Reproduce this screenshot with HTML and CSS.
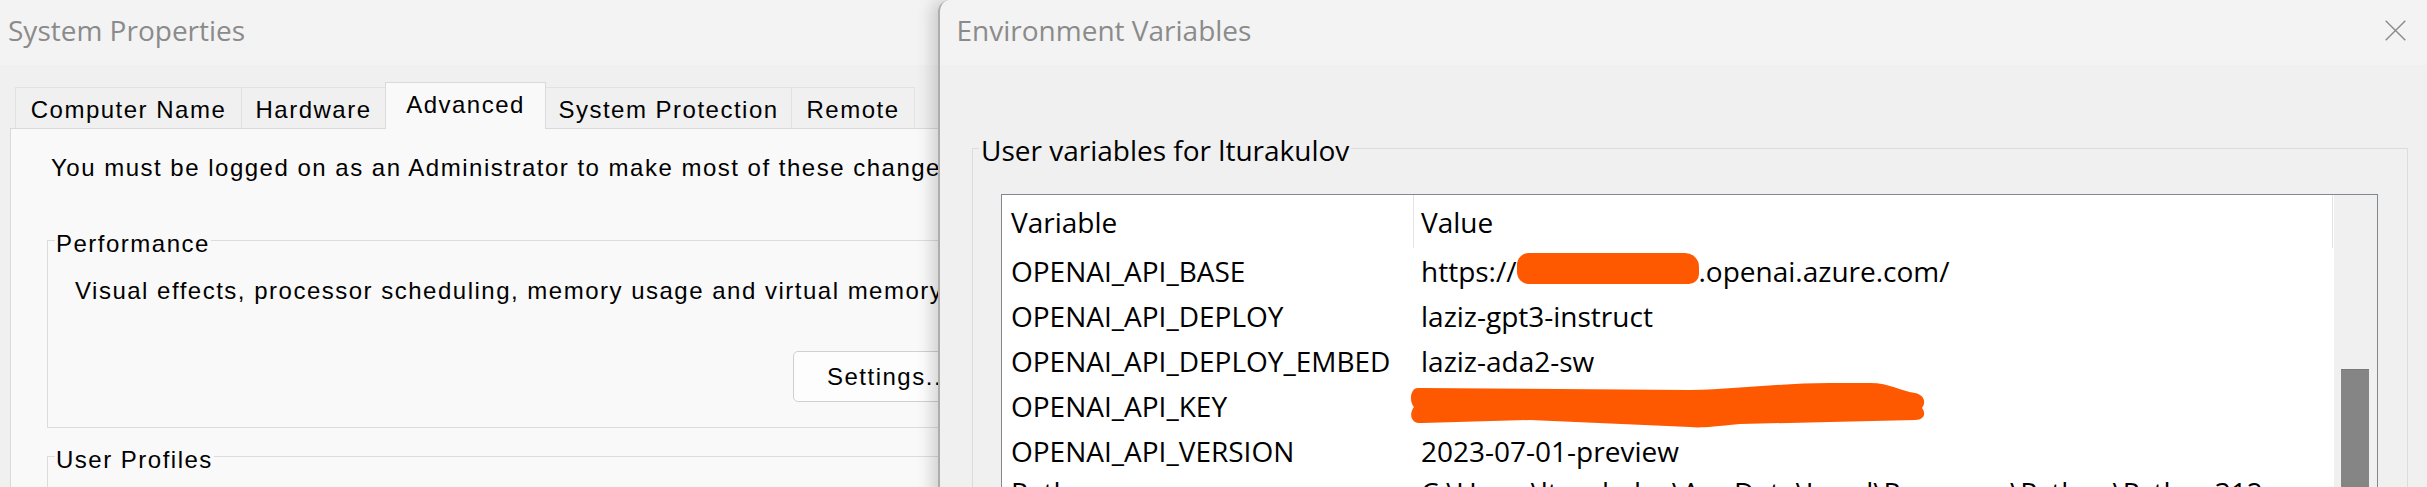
FILE: index.html
```html
<!DOCTYPE html>
<html lang="en">
<head>
<meta charset="utf-8">
<title>System Properties - Environment Variables</title>
<link rel="stylesheet" href="styles.css">
</head>
<body>
<div class="desk">
  <section class="win win-sys">
    <header class="titlebar"><span class="title">System Properties</span></header>
    <div class="win-body classic">
      <div class="tabs">
        <div class="tab w-cn">Computer Name</div>
        <div class="tab w-hw">Hardware</div>
        <div class="tab active w-adv">Advanced</div>
        <div class="tab w-sp">System Protection</div>
        <div class="tab w-rm">Remote</div>
      </div>
      <div class="panel">
        <p class="admin-note">You must be logged on as an Administrator to make most of these changes.</p>
        <fieldset class="group perf">
          <legend>Performance</legend>
          <p class="group-text">Visual effects, processor scheduling, memory usage and virtual memory</p>
          <button class="btn" type="button">Settings...</button>
        </fieldset>
        <fieldset class="group profiles">
          <legend>User Profiles</legend>
        </fieldset>
      </div>
    </div>
  </section>

  <section class="win win-env">
    <header class="titlebar env-titlebar">
      <span class="title">Environment Variables</span>
      <svg class="close" viewBox="0 0 21 21" aria-hidden="true">
        <path d="M0.7 0.7 L20.3 20.3 M20.3 0.7 L0.7 20.3" stroke="#8a8a8a" stroke-width="1.4" fill="none"/>
      </svg>
    </header>
    <div class="env-body segoe">
      <fieldset class="env-group">
        <legend>User variables for lturakulov</legend>
        <div class="listbox">
          <div class="list-main">
            <div class="list-head">
              <div class="hcell col-var">Variable</div>
              <div class="hcell col-val">Value</div>
            </div>
            <div class="list-rows">
              <div class="row">
                <div class="cell col-var">OPENAI_API_BASE</div>
                <div class="cell col-val">https://<span class="scribble"></span>.openai.azure.com/</div>
              </div>
              <div class="row">
                <div class="cell col-var">OPENAI_API_DEPLOY</div>
                <div class="cell col-val">laziz-gpt3-instruct</div>
              </div>
              <div class="row">
                <div class="cell col-var">OPENAI_API_DEPLOY_EMBED</div>
                <div class="cell col-val">laziz-ada2-sw</div>
              </div>
              <div class="row">
                <div class="cell col-var">OPENAI_API_KEY</div>
                <div class="cell col-val redacted-cell">
                  <svg class="brush" viewBox="0 0 515 45" aria-hidden="true">
                    <path d="M8 5 L280 7 C330 6 370 0 420 0 L460 0 C480 0 490 8 505 10 C515 12 516 20 512 25 C516 30 515 37 505 37 L420 39 L330 41 C300 44 290 45 280 44 L120 37 L12 40 C0 41 -1 30 4 24 C-1 19 0 5 8 5 Z" fill="#fe5800"/>
                  </svg>
                </div>
              </div>
              <div class="row">
                <div class="cell col-var">OPENAI_API_VERSION</div>
                <div class="cell col-val">2023-07-01-preview</div>
              </div>
              <div class="row row-partial">
                <div class="cell col-var">Path</div>
                <div class="cell col-val path-val">C:\Users\lturakulov\AppData\Local\Programs\Python\Python312\Scripts\;C:\Users\lturakulov\AppData\Local\Programs\Python\Python312\</div>
              </div>
            </div>
          </div>
          <div class="scrollbar"><div class="thumb"></div></div>
        </div>
      </fieldset>
    </div>
  </section>
</div>
</body>
</html>
```

FILE: styles.css
```css
* { box-sizing: border-box; }

html, body {
  margin: 0;
  padding: 0;
}

body {
  width: 2427px;
  height: 487px;
  overflow: hidden;
  background: #f0f0f0;
}

.desk {
  position: relative;
  width: 2427px;
  height: 487px;
  overflow: hidden;
}

/* windows on the desktop */
.win {
  position: absolute;
  top: 0;
  height: 640px;
  background: #f0f0f0;
}

.win-sys {
  left: 0;
  width: 1180px;
}

.win-env {
  left: 938px;
  width: 1489px;
  border-left: 2px solid #adadad;
  border-top-left-radius: 12px;
  box-shadow: -6px 0 16px rgba(0, 0, 0, 0.17);
  overflow: hidden;
}

.titlebar {
  height: 65px;
  background: #f3f3f3;
  padding: 16px 0 0 8px;
  display: flex;
  justify-content: space-between;
  align-items: flex-start;
}

.env-titlebar {
  padding: 16px 21px 0 16.5px;
}

.title {
  font-family: "Open Sans", "Noto Sans", sans-serif;
  font-size: 28px;
  line-height: 28px;
  color: #8b8b8b;
  white-space: nowrap;
}

.close {
  width: 21px;
  height: 21px;
  margin-top: 4px;
  flex: none;
}

/* classic (System Properties) text */
.classic {
  font-family: "Liberation Sans", Arial, sans-serif;
  font-size: 24px;
  letter-spacing: 1.5px;
  color: #000;
}

.win-body {
  padding-left: 10px;
}

.tabs {
  display: flex;
  align-items: flex-end;
  height: 63px;
  margin-left: 5px;
}

.tab {
  height: 41px;
  line-height: 44px;
  text-align: center;
  white-space: nowrap;
  border: 1px solid #e2e2e2;
  border-bottom: none;
  margin-right: -1px;
  background: #f0f0f0;
}

.tab.active {
  height: 47px;
  margin-bottom: -1px;
  background: #f9f9f9;
  border-color: #dadada;
  position: relative;
  z-index: 1;
}

.w-cn { width: 227px; }
.w-hw { width: 145px; }
.w-adv { width: 161px; }
.w-sp { width: 247px; }
.w-rm { width: 124px; }

.panel {
  width: 1150px;
  height: 520px;
  background: #f9f9f9;
  border: 1px solid #d9d9d9;
  padding: 24px 0 0 36px;
}

.admin-note {
  margin: 0;
  padding-left: 4px;
  line-height: 30px;
  white-space: nowrap;
}

.group {
  width: 1040px;
  min-width: 0;
  margin: 0;
  padding: 0 0 25px 0;
  border: 1px solid #dcdcdc;
}

.group legend {
  margin-left: 7px;
  padding: 7px 1px 0;
  line-height: 30px;
}

.perf { margin-top: 39px; }
.profiles { margin-top: 10px; height: 80px; }

.group-text {
  margin: 17px 0 0 27px;
  line-height: 30px;
  white-space: nowrap;
}

.btn {
  display: block;
  margin: 45px 0 0 745px;
  width: 240px;
  height: 51px;
  padding: 0 0 0 33px;
  text-align: left;
  font: inherit;
  letter-spacing: inherit;
  color: #000;
  background: #fdfdfd;
  border: 1px solid #d0d0d0;
  border-radius: 5px;
}

/* Environment Variables */
.segoe {
  font-family: "Open Sans", "Noto Sans", sans-serif;
  font-size: 28px;
  color: #000;
}

.env-body {
  padding-top: 63px;
}

.env-group {
  min-width: 0;
  margin: 0 19px 0 32px;
  padding: 0;
  border: 1px solid #dcdcdc;
  height: 560px;
}

.env-group legend {
  margin-left: 6px;
  padding: 4px 2px 0;
  line-height: 36px;
  white-space: nowrap;
}

.listbox {
  display: flex;
  margin: 26px 29px 0 28px;
  height: 420px;
  background: #fff;
  border: 1px solid #828790;
}

.list-main {
  flex: 1;
  min-width: 0;
}

.list-head {
  display: flex;
  height: 53px;
}

.hcell {
  line-height: 54px;
  white-space: nowrap;
  border-right: 1px solid #e3e3e3;
}

.col-var {
  width: 412px;
  flex: none;
  padding-left: 9px;
}

.col-val {
  width: 919px;
  flex: none;
  padding-left: 7px;
}

.list-rows {
  padding-top: 1px;
}

.row {
  display: flex;
  height: 45px;
}

.cell {
  line-height: 45px;
  white-space: nowrap;
  overflow: hidden;
  text-overflow: ellipsis;
}

.row-partial .cell {
  line-height: 36px;
}

.path-val {
  width: 880px;
}

.scribble {
  display: inline-block;
  width: 182px;
  height: 31px;
  vertical-align: -2px;
  background: #fe5800;
  border-radius: 12px 14px 10px 12px;
}

.redacted-cell {
  overflow: visible;
}

.brush {
  display: block;
  width: 515px;
  height: 45px;
  margin: -1px 0 0 -11px;
}

.scrollbar {
  width: 43px;
  flex: none;
  background: #f0f0f0;
  padding: 174px 0 0 7px;
}

.thumb {
  width: 28px;
  height: 200px;
  background: #858585;
  border-top: 1px solid #7a7a7a;
}
```
